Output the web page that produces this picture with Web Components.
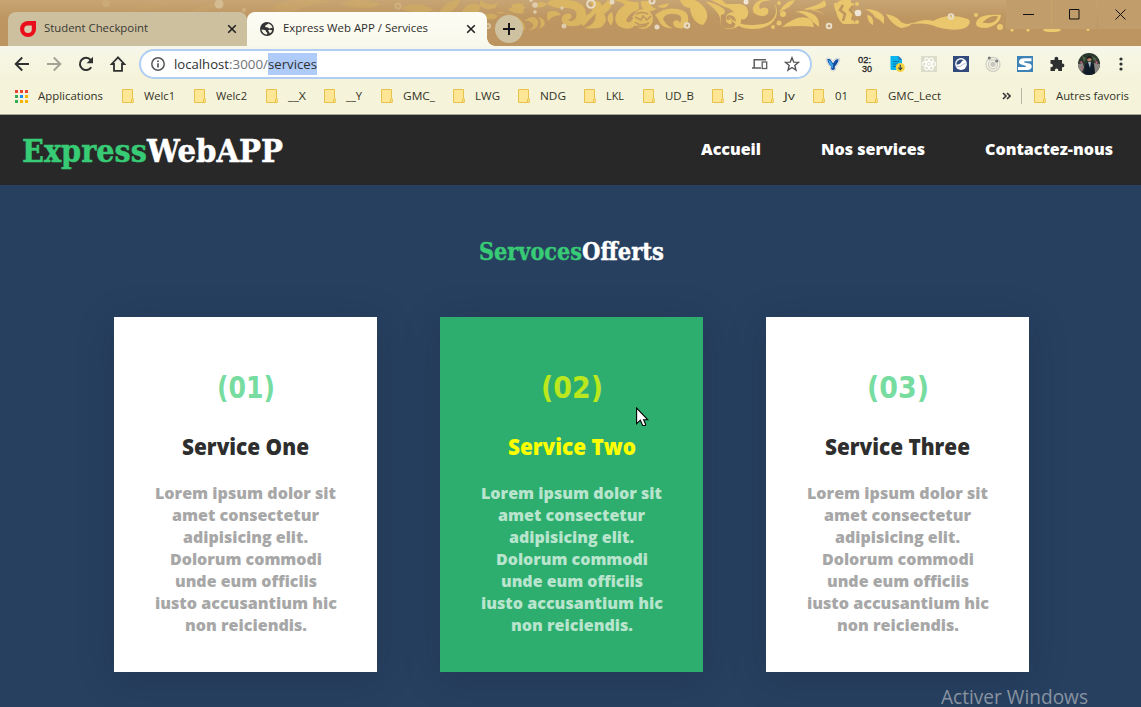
<!DOCTYPE html>
<html lang="fr">
<head>
<meta charset="utf-8">
<title>Express Web APP / Services</title>
<style>
html,body{margin:0;height:100%;overflow:hidden;background:#274060}
</style>
</head>
<body>
<app-window></app-window>
<script>
const define=(name,html,ready)=>{
  const t=document.createElement('template');t.innerHTML=html;
  customElements.define(name,class extends HTMLElement{
    connectedCallback(){
      if(this.shadowRoot)return;
      this.attachShadow({mode:'open'}).append(t.content.cloneNode(true));
      if(ready)ready(this,this.shadowRoot);
    }
  });
};

/* One line of text, fitted to the width in its w attribute */
define('fit-text',`<style>
:host{display:block;flex:none;white-space:nowrap}
span{display:inline-block;transform-origin:0 50%}
</style><span><slot></slot></span>`,(el,r)=>{
  const w=+el.getAttribute('w');
  el.style.width=w+'px';
  const s=r.querySelector('span');
  s.style.transform='scaleX('+(w/s.offsetWidth)+')';
  requestAnimationFrame(()=>{s.style.transform='none';s.style.transform='scaleX('+(w/s.getBoundingClientRect().width)+')'});
});

const icons={
 checkpoint:['0 0 16 16','<path d="M8 0h8v8a8 8 0 1 1-8-8z" fill="#ea0e1c"/><path d="M8 4.400h3.800V8A3.800 3.800 0 1 1 8 4.400z" fill="#d8ccb0"/>'],
 globe:['0 0 14 14','<circle cx="7" cy="7" r="7" fill="#303133"/><path d="M1.500 7.200C3 8.300 4.500 7.400 5.500 8.200c.8.700.2 1.700 1.200 2.100.7.300.9 1.200.3 2.300A5.600 5.600 0 0 1 1.500 7.200z" fill="#f4f3e4"/><path d="M8.300 1.500C7.500 2.800 5.400 2.800 5.200 4.200c-.1 1 .9 1.200 1.800 1.100 1.100-.1 1.200 1 2.200 1.200 1 .200 1.500-.700 3.300-.3A5.600 5.600 0 0 0 8.300 1.500zM8.300 8.200c1.200-.6 2.800-.3 3.900.2-.4 1.400-1.300 2.500-2.500 3.200.3-1.400-1.900-2.400-1.400-3.400z" fill="#f4f3e4"/>'],
 close:['0 0 10 10','<path d="M1.200 1.200l7.600 7.600M8.800 1.200L1.200 8.800" stroke="#222" stroke-width="1.600"/>'],
 plus:['0 0 12 12','<path d="M6 0v12M0 6h12" stroke="#16161a" stroke-width="2"/>'],
 back:['0 0 16 16','<path d="M15 8H2M8.200 1.500L1.700 8l6.500 6.500" fill="none" stroke="#2f3030" stroke-width="1.900"/>'],
 forward:['0 0 16 16','<path d="M1 8h13M7.800 1.500L14.300 8l-6.500 6.500" fill="none" stroke="#a2a195" stroke-width="1.900"/>'],
 reload:['0 0 16 16','<path d="M13.200 11.200A6.100 6.100 0 1 1 12.700 4" fill="none" stroke="#2f3030" stroke-width="2"/><path d="M15 .800v6.400H8.600z" fill="#2f3030"/>'],
 home:['0 0 18 18','<path d="M9 2.300L2.700 9H5v6.800h8V9h2.300z" fill="none" stroke="#2f3030" stroke-width="1.800"/>'],
 info:['0 0 14 14','<circle cx="7" cy="7" r="6.200" fill="none" stroke="#55575a" stroke-width="1.500"/><path d="M7 6.200v4.300M7 3.400v1.700" stroke="#55575a" stroke-width="1.700"/>'],
 devices:['0 0 16 12','<path d="M2.200 9.500V1.700H14M0 10h9" fill="none" stroke="#5c5e60" stroke-width="1.500"/><rect x="10.200" y="4" width="4.500" height="6.500" fill="none" stroke="#5c5e60" stroke-width="1.300"/>'],
 star:['0 0 16 16','<path d="M8 1.700l1.750 4.400 4.700.3-3.650 3 1.200 4.700L8 11.500l-4 2.600 1.200-4.700-3.650-3 4.700-.3z" fill="none" stroke="#55575a" stroke-width="1.400"/>'],
 vee:['0 0 16 16','<path d="M1 3q2-2 5 0l2 2.500L10 3q3-2 5 0-1 5-4.500 8.500V14q-2.500 2-5 0v-2.500Q2 8 1 3z" fill="#fff" stroke="#d0d2d4" stroke-width="1"/><path d="M2.200 3.400c1.500-.8 3-.3 3.900 1L8 7.200l2-2.800c.8-1 2-1.500 3.700-1-.6 3.300-2.200 5.300-3.900 7v2.800c-1.100.9-2.500.9-3.600 0v-2.800C4.300 8.700 2.800 6.500 2.200 3.400z" fill="#164f9c"/><path d="M3.300 4c1.500 0 2 .500 3 2L8 8.500v4C6.500 11 3.800 8 3.300 4z" fill="#3b9fe5"/>'],
 doc:['0 0 16 16','<path d="M1.500 0h8L13 3.500V14H3a1.500 1.500 0 0 1-1.500-1.500z" fill="#08b4ee"/><path d="M9.500 0L13 3.500H9.500z" fill="#4666a8"/><path d="M4 5.500h6M4 8h5M4 10.500h3" stroke="#1477a5" stroke-width="1.100"/><circle cx="11.300" cy="11.500" r="4.500" fill="#f7d33c"/><path d="M11.300 8.800v4.800M9.300 11.700l2 2 2-2" fill="none" stroke="#37444f" stroke-width="1.200"/>'],
 react:['0 0 16 16','<path d="M0 0h16v16H0z" fill="#dcdccb"/><g fill="none" stroke="#fffffb" stroke-width="1.200"><ellipse cx="8" cy="8" rx="6.600" ry="2.600"/><ellipse cx="8" cy="8" rx="6.600" ry="2.600" transform="rotate(60 8 8)"/><ellipse cx="8" cy="8" rx="6.600" ry="2.600" transform="rotate(120 8 8)"/></g><circle cx="8" cy="8" r="1.300" fill="#fffffb"/>'],
 wave:['0 0 16 16','<path d="M0 0h16v16H0z" fill="#314a7b"/><circle cx="8" cy="8" r="5.900" fill="#fff"/><path d="M3.300 8.200C3.500 4.500 7.500 2.300 11 4.300 8.500 4.200 8.500 6.800 7 7.800 5.800 8.500 4.300 8.800 3.300 8.200z" fill="#314a7b"/><path d="M3.500 10.300c2.800.6 4.200.1 5.500-1.100 1.200-1.100 2.200-1.600 3.800-1.400" fill="none" stroke="#9ba9c4" stroke-width=".8"/>'],
 orbit:['0 0 16 16','<g fill="none" stroke="#cdccc6" stroke-width="1.200"><circle cx="8" cy="8.300" r="7"/><circle cx="8" cy="8.300" r="4.500"/></g><circle cx="8" cy="8.300" r="2.600" fill="#c8c8c3"/><circle cx="4.300" cy="1.900" r="1.500" fill="#77797a"/><circle cx="11.700" cy="5" r="1.500" fill="#77797a"/>'],
 ess:['0 0 16 16','<path d="M0 0h16v16H0z" fill="#3d83b7"/><path d="M14.500 2.200H7C1.500 2.200.3 7.200 4.300 8.600L8.500 9.700c1 .5.4 1.300-.6 1.300H1v3h9.500c4.700 0 5.500-4.800 2.500-6.200L7.500 6.500C6.700 6 7 5.200 8 5.200h6.500z" fill="#fff"/>'],
 puzzle:['0 0 16 16','<path d="M1.500 4h4V2.700a1.900 1.900 0 0 1 3.800 0V4H13v3.500h.5a1.900 1.900 0 0 1 0 3.800H13V15H9.300v-.8a1.700 1.700 0 0 0-3.400 0V15H1.500v-3.800h.7a1.700 1.700 0 0 0 0-3.400h-.7z" fill="#2e2f2f"/>'],
 avatar:['0 0 22 22','<clipPath id="c"><circle cx="11" cy="11" r="11"/></clipPath><g clip-path="url(#c)"><path d="M0 0h22v22H0z" fill="#29362c"/><path d="M0 11l5-1 1 5-4 7H0zM16 10l6 1v6l-5 5z" fill="#8b8783"/><path d="M1 9l3-1 1 3zM17 7l3 2-2 3zM3 13l2 2-1 3z" fill="#b05d79"/><path d="M4 3l4 2-2 4zM14 3l5 3-3 2z" fill="#4e6647"/><path d="M6 22l1-10 3-3h3l3 3 1 10z" fill="#101c28"/><path d="M10 9h3l-1 6z" fill="#a9bcca"/><circle cx="11.300" cy="6.500" r="2.100" fill="#b58369"/><path d="M9 6q0-3 2.300-3t2.400 3l-2-1z" fill="#211a17"/></g>'],
 dots:['0 0 4 14','<circle cx="2" cy="2" r="1.600" fill="#2e2f2f"/><circle cx="2" cy="7" r="1.600" fill="#2e2f2f"/><circle cx="2" cy="12" r="1.600" fill="#2e2f2f"/>'],
 folder:['0 0 12 14','<path d="M.5.500h10v9.300h.800v3.700H.5z" fill="#ffe694" stroke="#e8c24b"/><path d="M9.500 13.500v-3.200l1-.8" fill="none" stroke="#e8c24b"/>'],
 apps:['0 0 13 13','<path d="M0 0h3v3H0zM5 0h3v3H5zM10 0h3v3h-3z" fill="#ea4335"/><path d="M0 5h3v3H0zM0 10h3v3H0z" fill="#34a853"/><path d="M5 5h3v3H5z" fill="#1a8cff"/><path d="M10 5h3v3h-3zM5 10h3v3H5zM10 10h3v3h-3z" fill="#f4b400"/>'],
 more:['0 0 9 8','<path d="M1 1l3 3-3 3M5 1l3 3-3 3" fill="none" stroke="#333" stroke-width="1.600"/>'],
 min:['0 0 11 11','<path d="M0 5.500h11" stroke="#111"/>'],
 max:['0 0 11 11','<path d="M.5.500h9.500v9.500H.5z" fill="none" stroke="#111"/>'],
 quit:['0 0 11 11','<path d="M.5.500l10 10M10.500.500l-10 10" stroke="#111"/>'],
 cursor:['0 0 13 20','<path d="M.6 1v15.700l3.700-3.500 2.400 5.300h2.600l.3-1.200-2-4.500h4.300z" fill="#fff" stroke="#000" stroke-width="1.100"/>']
};
define('ui-icon','<style>:host{display:block;flex:none}svg{display:block;width:100%;height:100%}</style>',(el,r)=>{
  const [box,art]=icons[el.getAttribute('name')],b=box.split(' ');
  el.style.width=b[2]+'px';el.style.height=b[3]+'px';
  r.innerHTML+=`<svg viewBox="${box}">${art}</svg>`;
});

/* Gold ornament of the window theme */
define('theme-ornament',`<style>:host{display:block}svg{display:block}</style>
<svg width="1141" height="46" viewBox="0 0 1141 46">
<defs><linearGradient id="u" gradientUnits="userSpaceOnUse" x1="0" x2="1141" y1="0" y2="0"><stop offset=".1" stop-color="#ddb963" stop-opacity="0"/><stop offset=".3" stop-color="#d9b55f" stop-opacity=".25"/><stop offset=".4" stop-color="#d9b55f" stop-opacity=".5"/><stop offset=".52" stop-color="#e0bb61" stop-opacity=".9"/><stop offset=".65" stop-color="#e8c46a"/><stop offset="1" stop-color="#edcb70"/></linearGradient></defs>
<g fill="url(#u)">
<path d="M130 10q18-14 40-6-22 2-28 20-12-1-12-14zM180 20q20-20 44-14-24 2-36 24zM270 9Q290-6 330 2q-24 2-42 12zM340 4q16-8 40 0-12 8-40 0zM400 8q18-8 34 2-16 6-34-2z"/>
<path d="M440 12q6-12 20-12-2 8-10 12zM462 12q4-10 16-8 4 4 0 8zM480 0q8 7 18 3l-3 5q-9 3-15-2zM511 4q5 1 8-2 0 4 4 1-1 4 3 4-4 2-2 6-9 2-16-4 6-1 3-5zM483 16q8-5 15 0-6 7-15 0zM496 12h9q-6 3-9 0zM505 13l12 4q8 5 8 12-1 3-4-1-3-8-16-15zM524 21q10-8 14 0 1 9-10 9 8-3 4-7-3-3-8-2zM538 17q9 2 6 9l-5 3q4-7-1-12z"/>
<path d="M533 6q8-7 14-2-5 6-14 2zM548 12q9-3 13 3-8 0-13 6-2-5 0-9zM547 4q2-5 9-4h10q20 1 20 15-1 13-17 11-9-2-7-9 3-5 9-3 2 6-3 5 3 5 8-1 3-11-12-10-9 1-17-4zM590 2q10-3 12 4-1 5-7 8l-6 6q-8 10-7 3 1-7 8-10 6-5 0-11z"/>
<path d="M608 0l4 4q-2 6-8 10 4 6 0 10-2 6-20 4 8-2 11-8 0-8 6-13zM612 12q3 8-1 14l-3-5q-2-6 4-9zM615 1q5-5 11-1 4 2 12 2 2 5 0 8-10 3-12 11 4 3 6-1 2-2 0-4 7-2 5 6-4 9-14 6-10-3-7-13 3-7 9-10-4-4-10-4z"/>
<path d="M641 1h10q-2 6 6 8l-8 3q-9-2-8-11zM657 6l12-3q-3 8-12 3zM655 15q10-8 22-6 13 1 11 13-2 8-10 6-7-2-4-7 5-2 6 2 4-8-5-9-10-1-12 5 4 8 10 9-9 1-13-5-2-5-5-8zM680 0q2 7 10 8 2 15 13 17 9-10-1-20-9-9-22-5z"/>
<path d="M704 1q12 2 20 8 3 5-3 6-2 13 5 13 10 2 10-7-1-6-7-6-4 1-2 5 5-2 5 3-3 3-6-2-2-8 7-9 10 2 8 10-2 7-13 7-9-1-8-11-1-5-9-12-7-6-7-5zM711 0h11l4 4h15q9 3 7 11-4 8-10 2-6-9-13-10z"/>
<path d="M728 16q10 10 25 9 23 0 23-15-1-11-11-9-8 2-5 8 5-3 8 0 2 7-6 7-11-1-9-9 4-9 15-7 12 4 8 17-5 12-24 12-15 0-24-13zM779 12q7-12 16-12-3 7-16 12zM782 27q18-15 30-7l2 7q-13-2-32 0zM795 12q9 0 17 9l7 6q1-9-6-13-9-5-18-2zM801 10q15-1 24 5-9-8-24-5zM804 9q18-5 20-9 5 6-2 8-8 3-18 1z"/>
<path d="M834 3q9-1 20 0l-2 7 4 3-3 7 3 4q-13 0-17-7-5-7-5-14zM843 0h8v24h-8q-7-6-7-15t7-9zM865 9q14 0 19 8v7q-5-5-9-7-3-5-10-8zM867 15q7 0 6 10-5-2-6-10zM886 14q11 2 15 8 7 4 12 0-2 5-12 6-9-3-15-14zM911 24q14-6 22-3 16-9 35-2 5 4-3 9-10 4-28-1-10-5-26-3zM976 23q2-10 25-8-1 10-15 13-11 0-10-5z"/>
<circle cx="779" cy="3" r="2"/><circle cx="783" cy="14" r="3"/><circle cx="779" cy="23" r="2.500"/><circle cx="773" cy="27" r="2"/><circle cx="857" cy="4" r="2"/><circle cx="857" cy="22" r="2"/><circle cx="643" cy="19" r="10"/><circle cx="976" cy="15" r="2"/><circle cx="1000" cy="27" r="3"/><ellipse cx="1052" cy="30" rx="9" ry="2"/><circle cx="1012" cy="30" r="1.700"/><circle cx="1028" cy="30" r="1.700"/><circle cx="1088" cy="29.500" r="1.500"/>
</g>
<g fill="none" stroke="#bc955f" stroke-width="1.500"><path d="M636 14q6-3 12 0M635 17l6 3 2-4 4 4 4-4M635 22q5 5 14 1M637 26q6 2 10-1"/><path d="M843 5l-3 5 5 4-2 7M853 6l-3 4 4 4-2 6" stroke-width="2.500"/><path d="M984 22q7-6 13-5-3 7-13 5z" fill="#bc955f"/></g>
<g fill="#eee5d6"><circle cx="219" cy="4" r="4.500" fill="#d5bb91"/><circle cx="106" cy="3" r="4" fill="#cbaa79"/><circle cx="244" cy="10" r="2" fill="#cfb17f"/><circle cx="535" cy="5" r="2.800" fill="#e0cdae"/><circle cx="535" cy="12" r="1.800" fill="#e0cdae"/><circle cx="531" cy="0" r="2" fill="#e0cdae"/><circle cx="562" cy="8" r="1.700" fill="#e0cdae"/><circle cx="564" cy="26" r="2.500" fill="#dfcba9"/><circle cx="612" cy="2" r="2.500" fill="#e7d9c1"/><circle cx="657" cy="27" r="2.500" fill="#e7d9c1"/><circle cx="746" cy="2" r="2.500"/><circle cx="858" cy="13" r="3.300"/></g>
<g fill="none" stroke="#e8dcc7" stroke-width="2"><circle cx="591" cy="4" r="3.800"/><circle cx="652" cy="1" r="2.500"/><circle cx="687" cy="25.500" r="2.300"/><circle cx="829" cy="26" r="2.300"/><circle cx="951" cy="16.500" r="2.300"/><circle cx="398" cy="6" r="2.500" stroke="#cfb080"/><circle cx="488" cy="26" r="2" stroke="#d9c39c"/></g>
</svg>`);

define('tab-strip',`<style>
:host{display:grid;height:46px;background:linear-gradient(#c7a574 0,#bd9661 18px,#bb945f 46px);font:11.500px "Open Sans","Noto Sans",sans-serif}
theme-ornament,.row{grid-area:1/1}
.row{display:flex;align-items:flex-start;position:relative;z-index:1;height:46px}
.tab{display:flex;box-sizing:border-box;align-items:center;width:239px;height:34px;margin:12px 0 0 8px;padding:0 10px 0 12px;border-radius:8px 8px 0 0;background:rgba(206,196,166,.9);color:#393834}
.tab fit-text{margin:0 auto 0 8px;line-height:32px;padding-bottom:2px}
.tab.on{margin-left:0;width:240px;padding:0 11px 0 13px;background:linear-gradient(#fdfdf5,#f8f8ec);color:#2d2d2b}
.tab.on fit-text{margin-left:9px}
.feet{width:8px;height:8px;margin-top:38px;background:radial-gradient(circle at 100% 0,transparent 7.500px,#f8f8ec 8px)}
.new{display:grid;place-items:center;width:28px;height:28px;margin:15px auto 0 0;border-radius:50%;background:rgba(207,199,167,.9)}
.win{display:flex;gap:1px;margin-right:-2px}
.win div{display:grid;place-items:center;width:45px;height:29px;background:#c19d6b}
.win div:nth-child(2){box-shadow:-1px 0 #c7a465}
</style><theme-ornament></theme-ornament>
<div class="row">
<div class="tab"><ui-icon name="checkpoint"></ui-icon><fit-text w="104">Student Checkpoint</fit-text><ui-icon name="close"></ui-icon></div>
<div class="tab on"><ui-icon name="globe"></ui-icon><fit-text w="145">Express Web APP / Services</fit-text><ui-icon name="close"></ui-icon></div>
<div class="feet"></div>
<div class="new"><ui-icon name="plus"></ui-icon></div>
<div class="win"><div><ui-icon name="min"></ui-icon></div><div><ui-icon name="max"></ui-icon></div><div><ui-icon name="quit"></ui-icon></div></div>
</div>`);

define('tool-bar',`<style>
:host{display:flex;align-items:center;height:36px;padding:0 4px 0 6px;font:13.500px "Open Sans","Noto Sans",sans-serif;color:#2e3032}
.c{display:grid;place-items:center;width:32px;height:30px;flex:none}
.box{display:flex;align-items:center;box-sizing:border-box;flex:1;height:30px;margin:0 5px 0 5px;padding:0 10px;border:2px solid #b0cef3;border-radius:15px;background:#fff}
.box>ui-icon:first-child{margin-right:9px}
.box fit-text{line-height:22px}
.dim{color:#717478}
.sel{background:#aecbfa}
.box ui-icon[name=devices]{margin:0 16px 0 auto}
.time{font:9.500px/9px "Liberation Sans",sans-serif;color:#222;-webkit-text-stroke:.3px #222}
.time fit-text:last-child{margin-left:4px}
</style>
<div class="c"><ui-icon name="back"></ui-icon></div><div class="c"><ui-icon name="forward"></ui-icon></div><div class="c"><ui-icon name="reload"></ui-icon></div><div class="c"><ui-icon name="home"></ui-icon></div>
<div class="box"><ui-icon name="info"></ui-icon><fit-text w="55">localhost</fit-text><fit-text w="39" class="dim">:3000/</fit-text><fit-text w="49" class="sel">services</fit-text><ui-icon name="devices"></ui-icon><ui-icon name="star"></ui-icon></div>
<div class="c"><ui-icon name="vee"></ui-icon></div>
<div class="c"><div class="time"><fit-text w="13">02:</fit-text><fit-text w="10">30</fit-text></div></div>
<div class="c"><ui-icon name="doc"></ui-icon></div><div class="c"><ui-icon name="react"></ui-icon></div><div class="c"><ui-icon name="wave"></ui-icon></div><div class="c"><ui-icon name="orbit"></ui-icon></div><div class="c"><ui-icon name="ess"></ui-icon></div><div class="c"><ui-icon name="puzzle"></ui-icon></div><div class="c"><ui-icon name="avatar"></ui-icon></div><div class="c"><ui-icon name="dots"></ui-icon></div>`);

define('bookmark-bar',`<style>
:host{display:flex;align-items:center;box-sizing:border-box;height:32px;padding:0 12px 4px 15px;font:11.600px/28px "Open Sans","Noto Sans",sans-serif;color:#333328}
.b{display:flex;align-items:center;gap:10px;flex:none}
.sep{width:1px;height:16px;margin:0 12px 0 10px;background:#b9b7a4}
.more{margin-left:auto}
</style>`,(el,r)=>{
  const rows=[['Applications',65,107,'apps'],['Welc1',31,72],['Welc2',31,72],['__X',18,58],['__Y',16,57],['GMC_',32,72],['LWG',25,65],['NDG',26,66],['LKL',18,59],['UD_B',29,69],['Js',10,50],['Jv',11,51],['01',13,53],['GMC_Lect',53,76]];
  r.innerHTML+=rows.map(([t,w,c,i])=>`<div class="b" style="width:${c}px"><ui-icon name="${i||'folder'}"></ui-icon><fit-text w="${w}">${t}</fit-text></div>`).join('')+
  '<ui-icon class="more" name="more"></ui-icon><div class="sep"></div><div class="b"><ui-icon name="folder"></ui-icon><fit-text w="73">Autres favoris</fit-text></div>';
});

define('site-header',`<style>
:host{display:flex;align-items:center;box-sizing:border-box;height:70px;padding:0 28px 0 22px;background:#282828;color:#fff;font:800 16px "Open Sans",sans-serif}
.logo{display:flex;margin-right:auto;padding-top:2px;font:bold 31px/68px "Roboto Slab","DejaVu Serif","DejaVu Serif Condensed",serif;-webkit-text-stroke:.5px}
.logo fit-text:first-child{color:#38cb75}
nav{display:flex;gap:60px;line-height:66px;padding-bottom:2px}
</style><div class="logo"><fit-text w="125">Express</fit-text><fit-text w="136">WebAPP</fit-text></div>
<nav><fit-text w="60">Accueil</fit-text><fit-text w="104">Nos services</fit-text><fit-text w="128">Contactez-nous</fit-text></nav>`);

define('service-card',`<style>
:host{display:flex;flex-direction:column;align-items:center;box-sizing:border-box;width:263px;height:355px;padding-top:47px;background:#fff;box-shadow:0 5px 35px rgba(30,30,50,.24);color:#a7a7a7;font:800 16px/22px "Open Sans",sans-serif;--num:#76dc9f;--head:#2e2e2e}
:host([hot]){background:#2dae6e;color:#b9e4cd;--num:#bbe71f;--head:#ff0}
.n{font:bold 31px/46px "Roboto Slab","DejaVu Sans",sans-serif;color:var(--num)}
.h{margin:21px 0;font-size:22px;line-height:30px;color:var(--head)}
</style>`,(el,r)=>{
  const a=n=>el.getAttribute(n);
  const lines=[['Lorem ipsum dolor sit',181],['amet consectetur',147],['adipisicing elit.',125],['Dolorum commodi',152],['unde eum officiis',142],['iusto accusantium hic',182],['non reiciendis.',122]];
  r.innerHTML+=`<fit-text class="n" w="${a('nw')}">${a('num')}</fit-text><fit-text class="h" w="${a('hw')}">${a('head')}</fit-text>`+lines.map(([t,w])=>`<fit-text w="${w}">${t}</fit-text>`).join('');
});

define('services-page',`<style>
:host{display:flex;flex-direction:column;align-items:center;height:522px;background:#274060}
.t{display:flex;margin:47px 0 45px 2px;font:bold 23.500px/40px "Roboto Slab","DejaVu Serif","DejaVu Serif Condensed",serif;color:#fff;-webkit-text-stroke:.4px}
.t fit-text:first-child{color:#38cb75}
.cards{display:flex;gap:63px;margin-left:2px}
</style><div class="t"><fit-text w="103">Servoces</fit-text><fit-text w="82">Offerts</fit-text></div>
<div class="cards"><service-card num="(01)" nw="58" head="Service One" hw="127"></service-card><service-card hot num="(02)" nw="62" head="Service Two" hw="128"></service-card><service-card num="(03)" nw="62" head="Service Three" hw="145"></service-card></div>`);

define('app-window',`<style>
:host{display:flex;flex-direction:column;position:relative;width:1141px;height:707px;overflow:hidden}
.bars{box-sizing:border-box;height:69px;background:linear-gradient(#f6f7ea,#f5f3d9 34px);border-bottom:1px solid #a5a78e}
.cursor{position:absolute;left:636px;top:407px}
.mark{position:absolute;left:941px;top:687px;height:20px;font:20px/20px "Open Sans","Noto Sans",sans-serif;color:#8993a0}
</style><tab-strip></tab-strip><div class="bars"><tool-bar></tool-bar><bookmark-bar></bookmark-bar></div><site-header></site-header><services-page></services-page>
<fit-text class="mark" w="147">Activer Windows</fit-text><ui-icon class="cursor" name="cursor"></ui-icon>`);
</script>
</body>
</html>
